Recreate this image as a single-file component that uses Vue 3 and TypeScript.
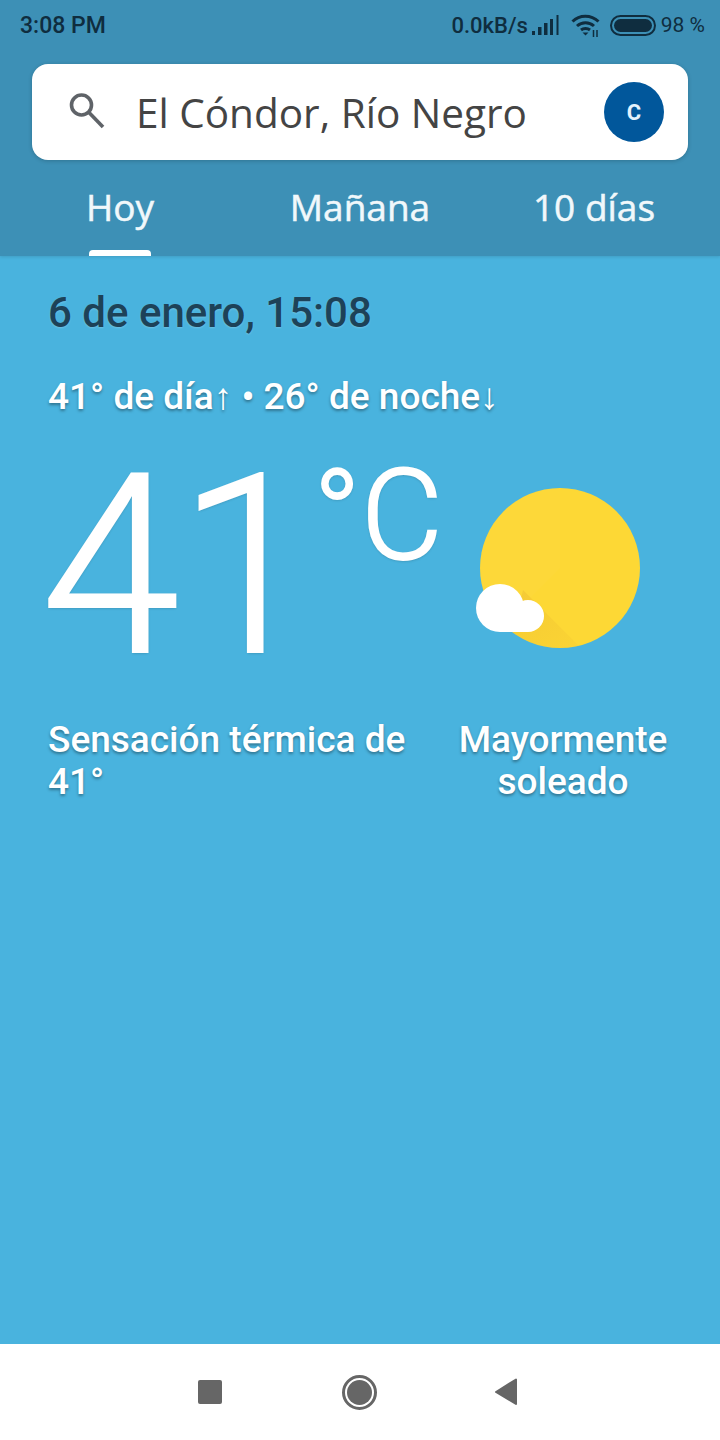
<script setup lang="ts">
const tabs = [
  { label: 'Hoy', active: true },
  { label: 'Mañana', active: false },
  { label: '10 días', active: false },
];
</script>

<template>
  <div class="phone">
    <header class="top">
      <div class="status">
        <span class="clock">3:08 PM</span>
        <div class="status-right">
          <span class="speed">0.0kB/s</span>
          <svg class="signal" width="28" height="20" viewBox="0 0 28 20">
            <rect x="0" y="16" width="3" height="4" fill="#0f2d3f" />
            <rect x="6" y="12" width="3.500" height="8" fill="#0f2d3f" />
            <rect x="12" y="8" width="3.500" height="12" fill="#0f2d3f" />
            <rect x="18" y="4" width="3" height="16" fill="#0f2d3f" />
            <rect x="24.500" y="0" width="2" height="20" fill="#0f2d3f" />
          </svg>
          <svg class="wifi" width="30" height="24" viewBox="0 0 30 24" fill="none" stroke="#0f2d3f" stroke-width="3">
            <path d="M1.500 8.500C8.500 1.500 20 1.500 27.500 8.500" />
            <path d="M6 13C11 8.500 18 8.500 23 13" />
            <path d="M10 17C12.500 15 16.500 15 19 17" />
            <path d="M11.500 19.500L14.500 22.500L17.500 19.500Z" fill="#0f2d3f" stroke="none" />
            <path d="M22.500 17V24M26 17V24" stroke-width="1.500" />
          </svg>
          <span class="battery"><span class="battery-fill"></span></span>
          <span class="percent">98 %</span>
        </div>
      </div>

      <div class="search">
        <svg class="search-icon" width="37" height="36" viewBox="0 0 37 36" fill="none" stroke="#5f6368" stroke-width="3.600">
          <circle cx="13.500" cy="12" r="10" />
          <path d="M21 19.500L35 34" />
        </svg>
        <span class="place">El Cóndor, Río Negro</span>
        <span class="avatar">C</span>
      </div>

      <nav class="tabs">
        <div v-for="tab in tabs" :key="tab.label" class="tab" :class="{ active: tab.active }">
          {{ tab.label }}
        </div>
      </nav>
    </header>

    <main class="content">
      <div class="date">6 de enero, 15:08</div>
      <div class="range">41° de día↑ • 26° de noche↓</div>

      <div class="now">
        <div class="temp">
          <span class="temp-value">41</span>
          <span class="temp-unit">°C</span>
        </div>
        <svg class="weather-icon" width="164" height="160" viewBox="0 0 164 160">
          <defs>
            <clipPath id="sunClip"><circle cx="84" cy="80" r="80" /></clipPath>
            <linearGradient id="shadowFade" x1="0" y1="0" x2="1" y2="1">
              <stop offset="0" stop-color="#e0a82e" stop-opacity="0.3" />
              <stop offset="1" stop-color="#e0a82e" stop-opacity="0.03" />
            </linearGradient>
          </defs>
          <circle cx="84" cy="80" r="80" fill="#fdd835" />
          <path d="M4 0H84V80L4 160Z" fill="#ffffff" opacity="0.025" clip-path="url(#sunClip)" />
          <path d="M47 102L120 175H30Z" fill="url(#shadowFade)" clip-path="url(#sunClip)" />
          <circle cx="24" cy="120" r="24" fill="#fff" />
          <circle cx="52" cy="128" r="16" fill="#fff" />
          <rect x="24" y="128" width="28" height="16" fill="#fff" />
        </svg>
      </div>

      <div class="details">
        <div class="feels">Sensación térmica de 41°</div>
        <div class="summary">Mayormente soleado</div>
      </div>
    </main>

    <footer class="nav">
      <span class="nav-square"></span>
      <span class="nav-circle"><span></span></span>
      <svg width="26" height="28" viewBox="0 0 26 28">
        <path d="M22 1.500V26L2 14Z" fill="#666" stroke="#666" stroke-width="2" stroke-linejoin="round" />
      </svg>
    </footer>
  </div>
</template>

<style>
body {
  margin: 0;
}
</style>

<style scoped>
.phone {
  width: 720px;
  height: 1440px;
  display: flex;
  flex-direction: column;
  overflow: hidden;
  font-family: Roboto, "Liberation Sans", sans-serif;
  background: #49b3de;
}
.top {
  height: 256px;
  box-sizing: border-box;
  background: #3d90b6;
  box-shadow: 0 1px 3px rgba(0, 0, 0, 0.12);
  position: relative;
  z-index: 1;
}
.status {
  height: 64px;
  padding: 0 15px 14px 20px;
  box-sizing: border-box;
  display: flex;
  align-items: center;
  justify-content: space-between;
  color: #0f2d3f;
}
.clock {
  font-size: 23px;
  font-weight: 500;
}
.status-right {
  display: flex;
  align-items: center;
}
.speed {
  font-size: 22px;
  font-weight: 500;
}
.signal {
  margin-left: 4px;
}
.wifi {
  margin-left: 11px;
}
.battery {
  margin-left: 9px;
  width: 46px;
  height: 21px;
  box-sizing: border-box;
  border: 2px solid #0f2d3f;
  border-radius: 11px;
  padding: 2px;
  display: flex;
}
.battery-fill {
  flex: 1;
  background: #0f2d3f;
  border-radius: 7px;
}
.percent {
  margin-left: 5px;
  font-size: 21px;
}
.search {
  margin: 0 32px;
  height: 96px;
  box-sizing: border-box;
  background: #fff;
  border-radius: 16px;
  box-shadow: 0 1px 4px rgba(0, 0, 0, 0.2);
  padding: 0 24px 0 36px;
  display: flex;
  align-items: center;
}
.search-icon {
  margin-top: -2px;
}
.place {
  margin-left: 31px;
  flex: 1;
  font-family: "Open Sans", sans-serif;
  font-size: 40.500px;
  color: #444;
  white-space: nowrap;
}
.avatar {
  width: 60px;
  height: 60px;
  border-radius: 50%;
  background: #01579b;
  color: #e3f2fd;
  font-size: 22px;
  font-weight: 700;
  display: flex;
  align-items: center;
  justify-content: center;
}
.tabs {
  height: 96px;
  display: grid;
  grid-template-columns: 240px 240px 228px;
}
.tab {
  position: relative;
  text-align: center;
  color: #f1f8fb;
  font-family: "Open Sans", sans-serif;
  font-size: 37px;
  line-height: 94px;
  -webkit-text-stroke: 0.5px #f1f8fb;
}
.tab.active::after {
  content: "";
  position: absolute;
  left: 89px;
  bottom: 0;
  width: 62px;
  height: 6px;
  background: #fff;
  border-radius: 4px 4px 0 0;
}
.content {
  flex: 1;
  padding: 0 48px;
  color: #fff;
}
.date {
  margin-top: 33px;
  font-size: 42px;
  font-weight: 500;
  line-height: 48px;
  color: #1d4258;
  text-shadow: 0 1px 2px rgba(255, 255, 255, 0.2);
}
.range {
  margin-top: 38px;
  font-size: 37px;
  font-weight: 500;
  line-height: 44px;
  text-shadow: 0 2px 3px rgba(0, 0, 0, 0.35);
}
.now {
  display: flex;
  align-items: flex-start;
  height: 260px;
  margin-top: 23px;
}
.temp {
  width: 432px;
  display: flex;
  align-items: flex-start;
  font-weight: 300;
  text-shadow: 0 1px 3px rgba(0, 0, 0, 0.25);
  -webkit-text-stroke: 2px #fff;
}
.temp-value {
  font-size: 250px;
  line-height: 260px;
  letter-spacing: -2px;
  margin-left: -7px;
  margin-top: -5px;
}
.temp-unit {
  font-size: 126px;
  line-height: 128px;
  margin-top: 10px;
  margin-left: -1px;
}
.weather-icon {
  margin-top: 46px;
  margin-left: -4px;
}
.details {
  display: flex;
  justify-content: space-between;
  margin-top: 17px;
  font-size: 37px;
  font-weight: 500;
  line-height: 42px;
  text-shadow: 0 2px 3px rgba(0, 0, 0, 0.35);
}
.feels {
  width: 380px;
}
.summary {
  width: 216px;
  text-align: center;
  margin-right: 1px;
}
.nav {
  height: 96px;
  background: #fff;
  display: flex;
  align-items: center;
  padding-left: 198px;
}
.nav-square {
  width: 24px;
  height: 24px;
  border-radius: 2px;
  background: #666;
}
.nav-circle {
  margin-left: 120px;
  margin-right: 117px;
  width: 25px;
  height: 25px;
  border: 3px solid #666;
  border-radius: 50%;
  padding: 2px;
  box-sizing: content-box;
  display: flex;
}
.nav-circle span {
  flex: 1;
  border-radius: 50%;
  background: #666;
}
</style>
